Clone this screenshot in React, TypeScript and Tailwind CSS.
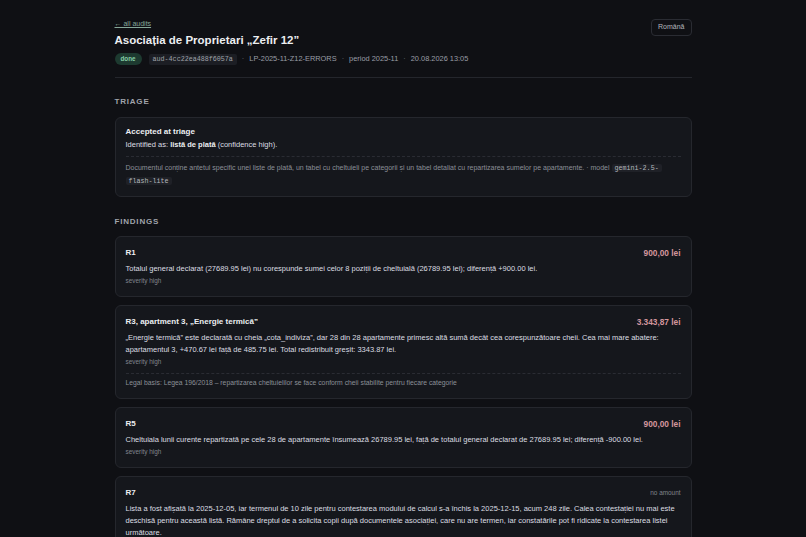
const findings = [
  {
    id: "R1",
    title: "R1",
    amount: "900,00 lei",
    text: "Totalul general declarat (27689.95 lei) nu corespunde sumei celor 8 poziții de cheltuială (26789.95 lei); diferență +900.00 lei.",
    severity: "high",
  },
  {
    id: "R3",
    title: "R3, apartment 3, „Energie termică”",
    amount: "3.343,87 lei",
    text: "„Energie termică” este declarată cu cheia „cota_indiviza”, dar 28 din 28 apartamente primesc altă sumă decât cea corespunzătoare cheii. Cea mai mare abatere: apartamentul 3, +470.67 lei față de 485.75 lei. Total redistribuit greșit: 3343.87 lei.",
    severity: "high",
    legal: "Legal basis: Legea 196/2018 – repartizarea cheltuielilor se face conform cheii stabilite pentru fiecare categorie",
  },
  {
    id: "R5",
    title: "R5",
    amount: "900,00 lei",
    text: "Cheltuiala lunii curente repartizată pe cele 28 de apartamente însumează 26789.95 lei, față de totalul general declarat de 27689.95 lei; diferență -900.00 lei.",
    severity: "high",
  },
  {
    id: "R7",
    title: "R7",
    amount: null,
    text: "Lista a fost afișată la 2025-12-05, iar termenul de 10 zile pentru contestarea modului de calcul s-a închis la 2025-12-15, acum 248 zile. Calea contestației nu mai este deschisă pentru această listă. Rămâne dreptul de a solicita copii după documentele asociației, care nu are termen, iar constatările pot fi ridicate la contestarea listei următoare.",
    severity: null,
  },
];

const mono = "font-['Liberation_Mono',monospace]";

function Dot() {
  return <span className="text-[#6b6f77]">·</span>;
}

export default function App() {
  return (
    <main className="min-h-screen bg-[#0f1014] font-['Liberation_Sans',Arial,sans-serif] text-[#dcdee2]">
      <div className="mx-auto max-w-[577px] pt-[19px] pb-10">
        <header className="flex items-start justify-between border-b border-[#24262c] pb-[12px]">
          <div>
            <a href="#" className="block text-[7px] leading-[10px] text-[#86a89a] underline">
              ← all audits
            </a>
            <h1 className="mt-[3px] text-[11.5px] font-bold leading-[16px] text-[#eceef1]">
              Asociația de Proprietari „Zefir 12”
            </h1>
            <div className="mt-[5px] flex items-center gap-[5px] text-[7.4px] leading-[12px] text-[#9a9ea6]">
              <span className="rounded-full bg-[#1d3a30] px-[6px] text-[6.3px] font-bold leading-[12px] text-[#86d1a8]">
                done
              </span>
              <span className={`${mono} ml-[2px] rounded-[2px] bg-[#1c1e24] px-[4px] text-[6.7px] leading-[11px] text-[#a0a4ab]`}>
                aud-4cc22ea488f6057a
              </span>
              <Dot />
              <span>LP-2025-11-Z12-ERRORS</span>
              <Dot />
              <span>period 2025-11</span>
              <Dot />
              <span>20.08.2026 13:05</span>
            </div>
          </div>
          <button className="h-[17px] rounded-[4px] border border-[#2a2c33] px-[6px] text-[7px] text-[#b4b7bd]">
            Română
          </button>
        </header>

        <section className="mt-[19px]">
          <h2 className="mb-[10px] text-[8px] font-bold uppercase leading-[10px] tracking-[0.1em] text-[#a0a4ab]">
            Triage
          </h2>
          <div className="rounded-[6px] border border-[#25272d] bg-[#15171c] px-[10px] pt-[8px] pb-[9px]">
            <div className="text-[8px] font-bold leading-[12px] text-[#eceef1]">Accepted at triage</div>
            <div className="mt-[1px] text-[7.5px] leading-[12px]">
              Identified as: <b className="text-[#eceef1]">listă de plată</b> (confidence high).
            </div>
            <div className="mt-[5px] border-t border-dashed border-[#2a2c33] pt-[4px] text-[7px] leading-[13px] text-[#8b8f97]">
              Documentul conține antetul specific unei liste de plată, un tabel cu cheltuieli pe categorii și un tabel
              detaliat cu repartizarea sumelor pe apartamente. · model{" "}
              <span className={`${mono} rounded-[2px] bg-[#1f2127] px-[3px] text-[6.7px] leading-none text-[#b4b7bd] [box-decoration-break:clone]`}>
                gemini-2.5-flash-lite
              </span>
            </div>
          </div>
        </section>

        <section className="mt-[20px]">
          <h2 className="mb-[9px] text-[8px] font-bold uppercase leading-[10px] tracking-[0.1em] text-[#a0a4ab]">
            Findings
          </h2>
          <div className="flex flex-col gap-[8px]">
            {findings.map((f) => (
              <div
                key={f.id}
                className="rounded-[6px] border border-[#25272d] bg-[#15171c] px-[10px] pt-[10px] pb-[10px]"
              >
                <div className="flex items-center justify-between leading-[12px]">
                  <span className="text-[8px] font-bold text-[#eceef1]">{f.title}</span>
                  {f.amount ? (
                    <span className="text-[8.3px] font-bold text-[#d4969c]">{f.amount}</span>
                  ) : (
                    <span className="text-[6.4px] text-[#80848c]">no amount</span>
                  )}
                </div>
                <p className="mt-[4px] text-[7.5px] leading-[12px]">{f.text}</p>
                {f.severity && (
                  <div className="mt-[1px] text-[6.4px] leading-[10px] text-[#80848c]">severity {f.severity}</div>
                )}
                {f.legal && (
                  <div className="mt-[6px] border-t border-dashed border-[#2a2c33] pt-[4px] text-[6.8px] leading-[10px] text-[#8b8f97]">
                    {f.legal}
                  </div>
                )}
              </div>
            ))}
          </div>
        </section>
      </div>
    </main>
  );
}
